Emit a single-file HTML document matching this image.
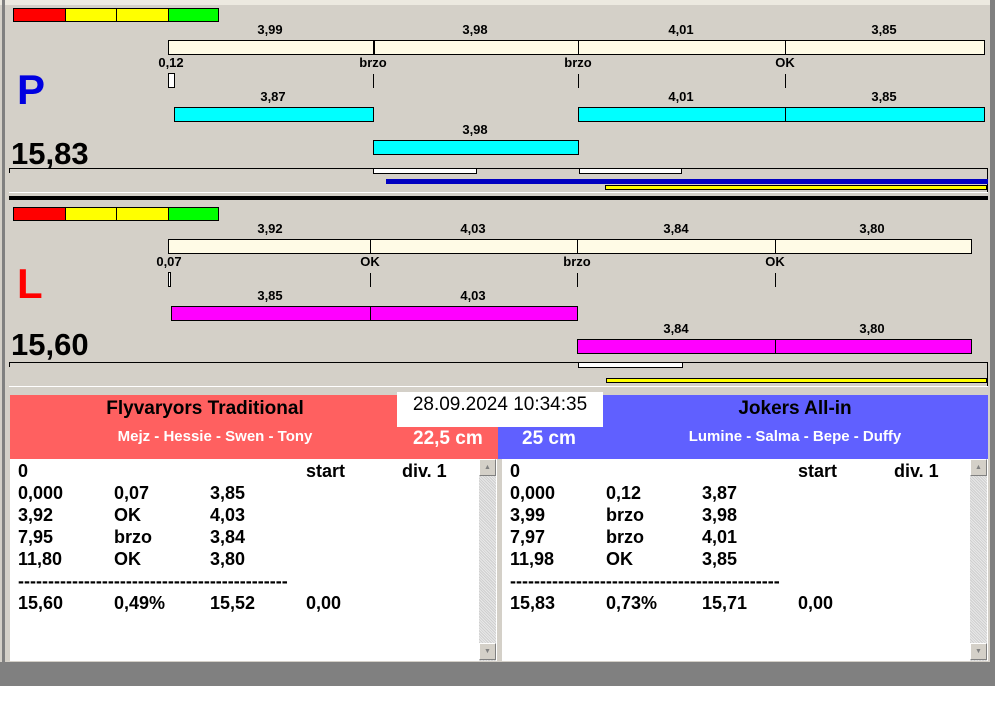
<!DOCTYPE html>
<html><head><meta charset="utf-8"><style>
*{margin:0;padding:0;box-sizing:border-box}
body{width:995px;height:716px;background:#fff;position:relative;overflow:hidden;font-family:"Liberation Sans",Arial,sans-serif}
div{position:absolute}
.l{font-weight:bold;font-size:13px;width:80px;text-align:center;line-height:14px;color:#000}
.b{border:1px solid #000}
.cr{background:#fffbe6}
.cy{background:#00ffff}
.mg{background:#ff00ff}
.t{width:1px;background:#000}
.row{font-weight:bold;font-size:18px;line-height:22px;white-space:pre;color:#000}
.sb{width:17px;background:repeating-linear-gradient(45deg,#e8e8e8 0 1px,#cfcfcf 1px 2px)}
.btn{width:17px;height:17px;background:#d4d0c8;border:1px solid;border-color:#fff #808080 #808080 #fff;font-size:7px;color:#808080;text-align:center;line-height:15px}
</style></head><body>
<div style="left:0;top:0;width:995px;height:686px;background:#d4d0c8"></div>
<div style="left:0;top:0;width:995px;height:5px;background:#ece9e0"></div>
<div style="left:2px;top:0;width:3px;height:686px;background:#808080"></div>
<div style="left:990px;top:0;width:5px;height:686px;background:#808080"></div>
<div style="left:0;top:662px;width:995px;height:24px;background:#808080"></div>

<div style="left:13px;top:8px;width:53px;height:14px;background:#f00" class="b"></div>
<div style="left:65px;top:8px;width:52px;height:14px;background:#ff0" class="b"></div>
<div style="left:116px;top:8px;width:53px;height:14px;background:#ff0" class="b"></div>
<div style="left:168px;top:8px;width:51px;height:14px;background:#0f0" class="b"></div>

<div class="l" style="left:230px;top:23px">3,99</div>
<div class="l" style="left:435px;top:23px">3,98</div>
<div class="l" style="left:641px;top:23px">4,01</div>
<div class="l" style="left:844px;top:23px">3,85</div>
<div class="b cr" style="left:168px;top:40px;width:817px;height:15px"></div>
<div class="t" style="left:373px;top:40px;height:15px;width:2px"></div>
<div class="t" style="left:578px;top:40px;height:15px"></div>
<div class="t" style="left:785px;top:40px;height:15px"></div>
<div class="l" style="left:131px;top:56px">0,12</div>
<div class="l" style="left:333px;top:56px">brzo</div>
<div class="l" style="left:538px;top:56px">brzo</div>
<div class="l" style="left:745px;top:56px">OK</div>
<div class="b" style="left:168px;top:73px;width:7px;height:15px;background:#fff"></div>
<div class="t" style="left:373px;top:74px;height:14px"></div>
<div class="t" style="left:578px;top:74px;height:14px"></div>
<div class="t" style="left:785px;top:74px;height:14px"></div>
<div style="left:17px;top:68px;font-size:42px;font-weight:bold;color:#0000e0;line-height:44px">P</div>
<div class="l" style="left:233px;top:90px">3,87</div>
<div class="l" style="left:641px;top:90px">4,01</div>
<div class="l" style="left:844px;top:90px">3,85</div>
<div class="b cy" style="left:174px;top:107px;width:200px;height:15px"></div>
<div class="b cy" style="left:578px;top:107px;width:407px;height:15px"></div>
<div class="t" style="left:785px;top:107px;height:15px"></div>
<div class="l" style="left:435px;top:123px">3,98</div>
<div class="b cy" style="left:373px;top:140px;width:206px;height:15px"></div>
<div style="left:11px;top:136px;font-size:31px;font-weight:bold;line-height:36px">15,83</div>
<div style="left:9px;top:168px;width:979px;height:1px;background:#000"></div>
<div class="t" style="left:9px;top:168px;height:5px"></div>
<div class="t" style="left:987px;top:168px;height:24px"></div>
<div class="b" style="left:373px;top:168px;width:104px;height:6px;background:#fff"></div>
<div class="b" style="left:579px;top:168px;width:103px;height:6px;background:#fff"></div>
<div style="left:386px;top:179px;width:602px;height:5px;background:#0000c0"></div>
<div class="b" style="left:605px;top:185px;width:382px;height:5px;background:#ff0"></div>
<div style="left:9px;top:192px;width:979px;height:1px;background:#fff"></div>
<div style="left:9px;top:196px;width:979px;height:4px;background:#000"></div>

<div style="left:13px;top:207px;width:53px;height:14px;background:#f00" class="b"></div>
<div style="left:65px;top:207px;width:52px;height:14px;background:#ff0" class="b"></div>
<div style="left:116px;top:207px;width:53px;height:14px;background:#ff0" class="b"></div>
<div style="left:168px;top:207px;width:51px;height:14px;background:#0f0" class="b"></div>
<div class="l" style="left:230px;top:222px">3,92</div>
<div class="l" style="left:433px;top:222px">4,03</div>
<div class="l" style="left:636px;top:222px">3,84</div>
<div class="l" style="left:832px;top:222px">3,80</div>
<div class="b cr" style="left:168px;top:239px;width:804px;height:15px"></div>
<div class="t" style="left:370px;top:239px;height:15px"></div>
<div class="t" style="left:577px;top:239px;height:15px"></div>
<div class="t" style="left:775px;top:239px;height:15px"></div>
<div class="l" style="left:129px;top:255px">0,07</div>
<div class="l" style="left:330px;top:255px">OK</div>
<div class="l" style="left:537px;top:255px">brzo</div>
<div class="l" style="left:735px;top:255px">OK</div>
<div class="b" style="left:168px;top:272px;width:3px;height:15px;background:#fff"></div>
<div class="t" style="left:370px;top:273px;height:14px"></div>
<div class="t" style="left:577px;top:273px;height:14px"></div>
<div class="t" style="left:775px;top:273px;height:14px"></div>
<div style="left:17px;top:262px;font-size:42px;font-weight:bold;color:#f00;line-height:44px">L</div>
<div class="l" style="left:230px;top:289px">3,85</div>
<div class="l" style="left:433px;top:289px">4,03</div>
<div class="b mg" style="left:171px;top:306px;width:407px;height:15px"></div>
<div class="t" style="left:370px;top:306px;height:15px"></div>
<div class="l" style="left:636px;top:322px">3,84</div>
<div class="l" style="left:832px;top:322px">3,80</div>
<div class="b mg" style="left:577px;top:339px;width:395px;height:15px"></div>
<div class="t" style="left:775px;top:339px;height:15px"></div>
<div style="left:11px;top:327px;font-size:31px;font-weight:bold;line-height:36px">15,60</div>
<div style="left:9px;top:362px;width:979px;height:1px;background:#000"></div>
<div class="t" style="left:9px;top:362px;height:5px"></div>
<div class="t" style="left:987px;top:362px;height:24px"></div>
<div class="b" style="left:578px;top:362px;width:105px;height:6px;background:#fff"></div>
<div class="b" style="left:606px;top:378px;width:381px;height:5px;background:#ff0"></div>
<div style="left:9px;top:386px;width:979px;height:1px;background:#fff"></div>

<div style="left:10px;top:395px;width:489px;height:64px;background:#ff6060"></div>
<div style="left:498px;top:395px;width:490px;height:64px;background:#6060ff"></div>
<div style="left:10px;top:397px;width:390px;text-align:center;font-weight:bold;font-size:19px;line-height:24px">Flyvaryors Traditional</div>
<div style="left:10px;top:428px;width:410px;text-align:center;font-weight:bold;font-size:15px;color:#fff">Mejz - Hessie - Swen - Tony</div>
<div style="left:397px;top:392px;width:206px;height:35px;background:#fff"></div>
<div style="left:397px;top:393px;width:206px;text-align:center;font-size:19px;line-height:24px">28.09.2024 10:34:35</div>
<div style="left:413px;top:427px;font-weight:bold;font-size:19px;color:#fff;line-height:24px">22,5 cm</div>
<div style="left:522px;top:427px;font-weight:bold;font-size:19px;color:#fff;line-height:24px">25 cm</div>
<div style="left:600px;top:397px;width:390px;text-align:center;font-weight:bold;font-size:19px;line-height:24px">Jokers All-in</div>
<div style="left:600px;top:428px;width:390px;text-align:center;font-weight:bold;font-size:15px;color:#fff">Lumine - Salma - Bepe - Duffy</div>

<div style="left:10px;top:459px;width:487px;height:202px;background:#fff"></div>
<div class="sb" style="left:479px;top:459px;height:202px"></div>
<div class="btn" style="left:479px;top:459px">▲</div>
<div class="btn" style="left:479px;top:643px">▼</div>
<div style="left:502px;top:459px;width:486px;height:202px;background:#fff"></div>
<div class="sb" style="left:970px;top:459px;height:202px"></div>
<div class="btn" style="left:970px;top:459px">▲</div>
<div class="btn" style="left:970px;top:643px">▼</div>

<div class="row" style="left:18px;top:460px">0<span style="position:absolute;left:288px">start</span><span style="position:absolute;left:384px">div. 1</span></div>
<div class="row" style="left:18px;top:482px">0,000<span style="position:absolute;left:96px">0,07</span><span style="position:absolute;left:192px">3,85</span></div>
<div class="row" style="left:18px;top:504px">3,92<span style="position:absolute;left:96px">OK</span><span style="position:absolute;left:192px">4,03</span></div>
<div class="row" style="left:18px;top:526px">7,95<span style="position:absolute;left:96px">brzo</span><span style="position:absolute;left:192px">3,84</span></div>
<div class="row" style="left:18px;top:548px">11,80<span style="position:absolute;left:96px">OK</span><span style="position:absolute;left:192px">3,80</span></div>
<div class="row" style="left:18px;top:570px">---------------------------------------------</div>
<div class="row" style="left:18px;top:592px">15,60<span style="position:absolute;left:96px">0,49%</span><span style="position:absolute;left:192px">15,52</span><span style="position:absolute;left:288px">0,00</span></div>

<div class="row" style="left:510px;top:460px">0<span style="position:absolute;left:288px">start</span><span style="position:absolute;left:384px">div. 1</span></div>
<div class="row" style="left:510px;top:482px">0,000<span style="position:absolute;left:96px">0,12</span><span style="position:absolute;left:192px">3,87</span></div>
<div class="row" style="left:510px;top:504px">3,99<span style="position:absolute;left:96px">brzo</span><span style="position:absolute;left:192px">3,98</span></div>
<div class="row" style="left:510px;top:526px">7,97<span style="position:absolute;left:96px">brzo</span><span style="position:absolute;left:192px">4,01</span></div>
<div class="row" style="left:510px;top:548px">11,98<span style="position:absolute;left:96px">OK</span><span style="position:absolute;left:192px">3,85</span></div>
<div class="row" style="left:510px;top:570px">---------------------------------------------</div>
<div class="row" style="left:510px;top:592px">15,83<span style="position:absolute;left:96px">0,73%</span><span style="position:absolute;left:192px">15,71</span><span style="position:absolute;left:288px">0,00</span></div>
</body></html>
